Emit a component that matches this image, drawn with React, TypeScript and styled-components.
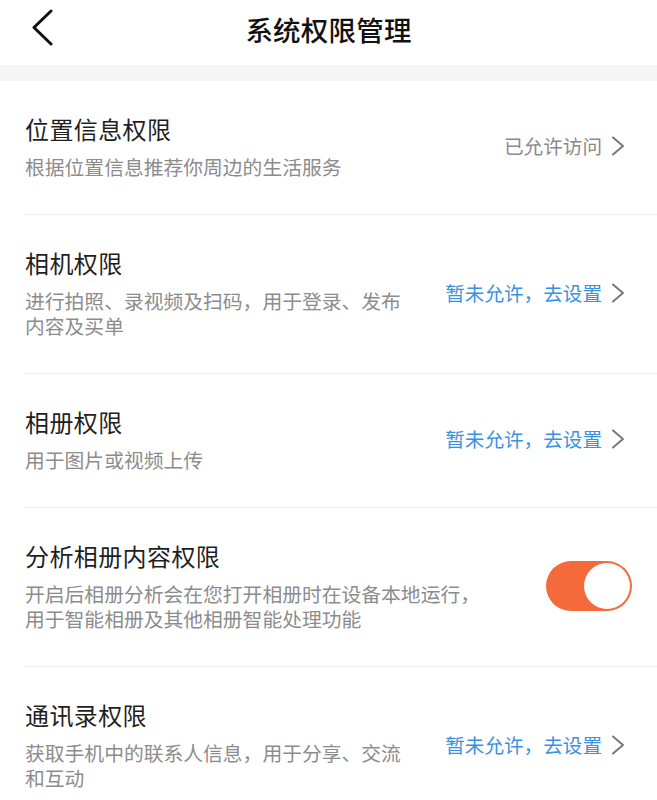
import React from "react";
import styled, { createGlobalStyle } from "styled-components";

const GlobalStyle = createGlobalStyle`
  html, body {
    margin: 0;
    padding: 0;
    background: #ffffff;
    font-family: "Noto Sans CJK SC", "Noto Sans", sans-serif;
  }
`;

type Permission = {
  title: string;
  desc: string;
  status: "allowed" | "denied" | "toggle";
};

const permissions: Permission[] = [
  {
    title: "位置信息权限",
    desc: "根据位置信息推荐你周边的生活服务",
    status: "allowed",
  },
  {
    title: "相机权限",
    desc: "进行拍照、录视频及扫码，用于登录、发布内容及买单",
    status: "denied",
  },
  { title: "相册权限", desc: "用于图片或视频上传", status: "denied" },
  {
    title: "分析相册内容权限",
    desc: "开启后相册分析会在您打开相册时在设备本地运行，用于智能相册及其他相册智能处理功能",
    status: "toggle",
  },
  {
    title: "通讯录权限",
    desc: "获取手机中的联系人信息，用于分享、交流和互动",
    status: "denied",
  },
];

const Page = styled.div`
  width: 657px;
  height: 800px;
  overflow: hidden;
  background: #ffffff;
`;

const Header = styled.header`
  position: relative;
  height: 65px;
  display: flex;
  align-items: center;
  justify-content: center;
  padding-bottom: 8px;
  box-sizing: border-box;
`;

const BackButton = styled.button`
  position: absolute;
  left: 28px;
  top: 9px;
  width: 28px;
  height: 38px;
  padding: 0;
  border: none;
  background: none;
  display: flex;
  align-items: center;
  justify-content: center;
`;

const HeaderTitle = styled.h1`
  margin: 0;
  font-size: 27.5px;
  font-weight: 500;
  color: #111111;
  letter-spacing: 0.2px;
`;

const Band = styled.div`
  height: 16px;
  background: #f5f5f5;
`;

const List = styled.ul`
  list-style: none;
  margin: 0;
  padding: 0;
`;

const Row = styled.li`
  margin-left: 25px;
  padding: 32px 25px 35px 0;
  border-bottom: 1px solid #eeeeee;
  display: flex;
  align-items: center;
  gap: 16px;
`;

const Texts = styled.div<{ $wide?: boolean }>`
  flex: 1;
  max-width: ${(p) => (p.$wide ? "462px" : "390px")};
  display: flex;
  flex-direction: column;
  gap: 9px;
`;

const Title = styled.div`
  font-size: 24px;
  line-height: 32px;
  color: #1f1f1f;
  letter-spacing: 0.4px;
`;

const Desc = styled.div`
  font-size: 19.8px;
  line-height: 25px;
  color: #8c8c8c;
`;

const Action = styled.div<{ $blue?: boolean }>`
  margin-left: auto;
  padding-right: 7px;
  display: flex;
  align-items: center;
  gap: 9px;
  font-size: 19.6px;
  line-height: 24px;
  color: ${(p) => (p.$blue ? "#3a91e2" : "#8a8a8a")};
  white-space: nowrap;
`;

const Switch = styled.div<{ $on: boolean }>`
  margin-left: auto;
  flex-shrink: 0;
  width: 86px;
  height: 50px;
  border-radius: 25px;
  background: ${(p) => (p.$on ? "#f46a3a" : "#e5e5e5")};
  display: flex;
  align-items: center;
  justify-content: ${(p) => (p.$on ? "flex-end" : "flex-start")};
  padding: 2px;
  box-sizing: border-box;
`;

const Knob = styled.div`
  width: 46px;
  height: 46px;
  border-radius: 50%;
  background: #ffffff;
`;

const BackIcon = () => (
  <svg width="24" height="38" viewBox="0 0 24 38">
    <polyline
      points="21,2 4,18.5 21,35"
      fill="none"
      stroke="#111"
      strokeWidth="3"
      strokeLinecap="round"
      strokeLinejoin="round"
    />
  </svg>
);

const Chevron = () => (
  <svg width="14" height="20" viewBox="0 0 14 20">
    <polyline
      points="2,1.5 12,10 2,18.5"
      fill="none"
      stroke="#777"
      strokeWidth="2"
      strokeLinecap="round"
      strokeLinejoin="round"
    />
  </svg>
);

const App = () => {
  const [analysisOn, setAnalysisOn] = React.useState(true);

  return (
    <Page>
      <GlobalStyle />
      <Header>
        <BackButton aria-label="返回">
          <BackIcon />
        </BackButton>
        <HeaderTitle>系统权限管理</HeaderTitle>
      </Header>
      <Band />
      <List>
        {permissions.map((item) => (
          <Row key={item.title}>
            <Texts $wide={item.status === "toggle"}>
              <Title>{item.title}</Title>
              <Desc>{item.desc}</Desc>
            </Texts>
            {item.status === "toggle" ? (
              <Switch $on={analysisOn} onClick={() => setAnalysisOn(!analysisOn)}>
                <Knob />
              </Switch>
            ) : (
              <Action $blue={item.status === "denied"}>
                {item.status === "allowed" ? "已允许访问" : "暂未允许，去设置"}
                <Chevron />
              </Action>
            )}
          </Row>
        ))}
      </List>
    </Page>
  );
};

export default App;
